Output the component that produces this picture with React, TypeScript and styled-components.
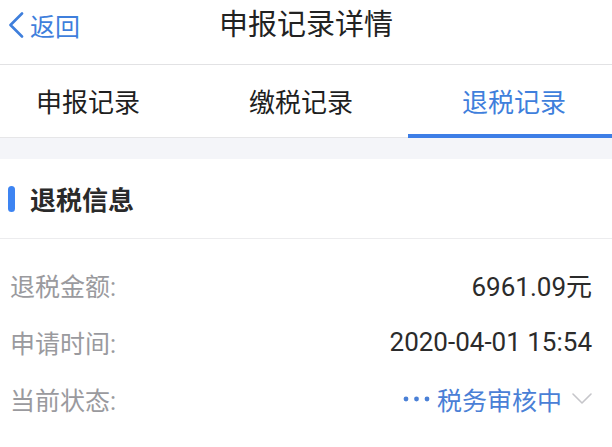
import React from 'react';
import styled, { createGlobalStyle } from 'styled-components';

const GlobalStyle = createGlobalStyle`
  html, body {
    margin: 0;
    padding: 0;
    background: #ffffff;
  }
  body {
    font-family: Roboto, "Noto Sans CJK SC", sans-serif;
    width: 612px;
    height: 447px;
    overflow: hidden;
  }
`;

const Page = styled.div`
  display: flex;
  flex-direction: column;
  width: 612px;
  height: 447px;
  background: #fff;
`;

const Header = styled.header`
  height: 64px;
  border-bottom: 1px solid #e2e2e4;
  display: grid;
  grid-template-columns: 1fr auto 1fr;
  align-items: start;
`;

const BackButton = styled.div`
  display: flex;
  align-items: center;
  gap: 6px;
  height: 50px;
  padding-left: 8px;
  color: #3f7fdc;
  font-size: 25px;
`;

const Title = styled.h1`
  margin: 0;
  height: 50px;
  line-height: 50px;
  font-size: 29px;
  font-weight: 400;
  color: #222;
`;

const TabBar = styled.nav`
  display: grid;
  grid-template-columns: repeat(3, 1fr);
  height: 72px;
  border-bottom: 1px solid #e6e6e8;
`;

const Tab = styled.div<{ $active?: boolean; $shift: number }>`
  display: flex;
  align-items: center;
  justify-content: center;
  padding-top: 2px;
  padding-left: ${p => (p.$shift > 0 ? p.$shift * 2 : 0)}px;
  padding-right: ${p => (p.$shift < 0 ? -p.$shift * 2 : 0)}px;
  font-size: 26px;
  color: ${p => (p.$active ? '#3f7fdc' : '#1e1e1e')};
  border-bottom: 4px solid ${p => (p.$active ? '#3d7ee6' : 'transparent')};
  margin-bottom: -1px;
`;

const Gap = styled.div`
  height: 21px;
  background: #f4f5f9;
`;

const SectionHead = styled.div`
  display: flex;
  align-items: center;
  gap: 15px;
  height: 79px;
  padding-left: 8px;
  border-bottom: 1px solid #ececee;
`;

const Marker = styled.span`
  width: 7px;
  height: 26px;
  border-radius: 4px;
  background: #3d84f2;
`;

const SectionTitle = styled.h2`
  margin: 0;
  font-size: 26px;
  font-weight: 700;
  color: #2a2a2a;
`;

const List = styled.div`
  display: flex;
  flex-direction: column;
  padding: 17px 20px 0 10px;
`;

const Row = styled.div`
  display: flex;
  align-items: center;
  justify-content: space-between;
  height: 57px;
`;

const Label = styled.span`
  font-size: 25px;
  color: #9a9a9e;
`;

const Value = styled.span`
  font-size: 26px;
  color: #2b2b2b;
`;

const Status = styled.span`
  display: flex;
  align-items: center;
  color: #4a80d6;
  font-size: 25px;
`;

const Dots = styled.svg`
  margin-right: 7px;
`;

const Chevron = styled.svg`
  margin-left: 10px;
`;

const App: React.FC = () => {
  return (
    <Page>
      <GlobalStyle />
      <Header>
        <BackButton>
          <svg width="16" height="26" viewBox="0 0 16 26">
            <polyline points="14,1.5 2.5,13 14,24.5" fill="none" stroke="#3f7fdc" strokeWidth="2.6" strokeLinecap="round" strokeLinejoin="round" />
          </svg>
          返回
        </BackButton>
        <Title>申报记录详情</Title>
        <div />
      </Header>

      <TabBar>
        <Tab $shift={-14}>申报记录</Tab>
        <Tab $shift={-5}>缴税记录</Tab>
        <Tab $shift={4} $active>退税记录</Tab>
      </TabBar>

      <Gap />

      <SectionHead>
        <Marker />
        <SectionTitle>退税信息</SectionTitle>
      </SectionHead>

      <List>
        <Row>
          <Label>退税金额:</Label>
          <Value>6961.09元</Value>
        </Row>
        <Row>
          <Label>申请时间:</Label>
          <Value>2020-04-01 15:54</Value>
        </Row>
        <Row>
          <Label>当前状态:</Label>
          <Status>
            <Dots width="27" height="6" viewBox="0 0 27 6">
              <circle cx="3" cy="3" r="2.4" fill="#4a80d6" />
              <circle cx="13.5" cy="3" r="2.4" fill="#4a80d6" />
              <circle cx="24" cy="3" r="2.4" fill="#4a80d6" />
            </Dots>
            税务审核中
            <Chevron width="20" height="12" viewBox="0 0 20 12">
              <polyline points="1,1 10,10 19,1" fill="none" stroke="#c6c6ca" strokeWidth="1.6" strokeLinecap="round" strokeLinejoin="round" />
            </Chevron>
          </Status>
        </Row>
      </List>
    </Page>
  );
};

export default App;
